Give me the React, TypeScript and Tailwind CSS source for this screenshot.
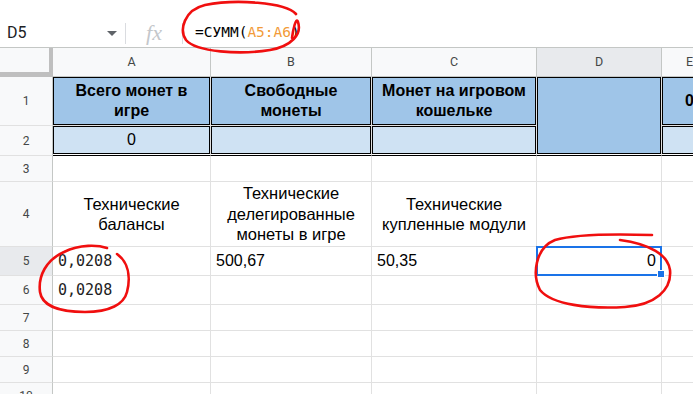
import React from "react";

const sans = "font-['Liberation_Sans',Arial,sans-serif]";
const ui = "font-['Roboto',Arial,sans-serif]";
const mono = "font-['DejaVu_Sans_Mono',monospace]";

const gridLine = "border-r border-b border-[#e1e1e1]";

function RowHead({ n, active = false }: { n: number; active?: boolean }) {
  return (
    <div
      className={`flex items-center justify-center border-r border-b border-[#e1e1e1] border-r-[#c4c7c5] text-[12px] text-[#444746] ${ui} ${
        active ? "bg-[#e8eaed]" : "bg-[#f8f9fa]"
      }`}
    >
      {n}
    </div>
  );
}

function ColHead({ label, active = false }: { label: string; active?: boolean }) {
  return (
    <div
      className={`flex items-center justify-center border-r border-b border-[#c4c7c5] text-[12.5px] text-[#444746] ${ui} ${
        active ? "bg-[#e8eaed]" : "bg-[#f8f9fa]"
      }`}
    >
      {label}
    </div>
  );
}

// blue bordered cells in rows 1-2
function BlueCell({
  children,
  light = false,
  bottom = false,
  className = "",
}: {
  children?: React.ReactNode;
  light?: boolean;
  bottom?: boolean;
  className?: string;
}) {
  return (
    <div className={`border-r border-[#e1e1e1] ${bottom ? "border-b border-b-black pb-px" : "border-b"} ${className}`}>
      <div
        className={`flex h-full items-center justify-center border border-black px-[6px] text-center text-black ${sans} ${
          light ? "bg-[#cfe2f3]" : "bg-[#9fc5e8]"
        }`}
      >
        {children}
      </div>
    </div>
  );
}

function Empty() {
  return <div className={gridLine} />;
}

export default function App() {
  return (
    <div className="relative h-[394px] w-[693px] overflow-hidden bg-white">
      {/* formula bar */}
      <div className="flex h-[48px] items-center border-b border-[#c4c7c5] pt-[19px]">
        <div className="flex w-[125px] items-center justify-between pl-[7px] pr-[8px]">
          <span className={`text-[16px] text-[#202124] ${ui}`}>D5</span>
          <svg width="10" height="5" viewBox="0 0 10 5">
            <path d="M0 0h10L5 5z" fill="#5f6368" />
          </svg>
        </div>
        <div className="h-[21px] w-px bg-[#dadce0]" />
        <div className="flex w-[56px] items-center justify-center">
          <span className="font-['Liberation_Serif',serif] text-[22px] italic leading-none text-[#c4c7cb]">fx</span>
        </div>
        <div className="h-[21px] w-px bg-[#dadce0]" />
        <div className={`pl-[12px] text-[14.5px] text-black ${mono}`}>
          =СУММ(<span className="text-[#f29b38]">A5:A6</span>)
        </div>
      </div>

      {/* sheet grid */}
      <div className="grid grid-cols-[53px_158px_161px_165px_125px_56px] grid-rows-[29px_49px_30px_26px_65px_29px_29px_26px_26px_26px_26px]">
        <div className="border-r-4 border-b-[5px] border-[#bfbfbf] bg-[#f8f9fa]" />
        {["A", "B", "C", "D", "E"].map((c) => (
          <ColHead key={c} label={c} active={c === "D"} />
        ))}

        {/* row 1 */}
        <RowHead n={1} />
        <BlueCell>
          <span className="text-[16px] font-bold leading-[20px]">Всего монет в игре</span>
        </BlueCell>
        <BlueCell>
          <span className="text-[16px] font-bold leading-[20px]">Свободные монеты</span>
        </BlueCell>
        <BlueCell>
          <span className="text-[16px] font-bold leading-[20px]">Монет на игровом кошельке</span>
        </BlueCell>
        <BlueCell bottom className="row-span-2" />
        <BlueCell>
          <span className="text-[16px] font-bold">0</span>
        </BlueCell>

        {/* row 2 */}
        <RowHead n={2} />
        <BlueCell light bottom>
          <span className="text-[16px]">0</span>
        </BlueCell>
        <BlueCell light bottom />
        <BlueCell light bottom />
        <BlueCell light bottom />

        {/* row 3 */}
        <RowHead n={3} />
        <Empty />
        <Empty />
        <Empty />
        <Empty />
        <Empty />

        {/* row 4 */}
        <RowHead n={4} />
        {["Технические балансы", "Технические делегированные монеты в игре", "Технические купленные модули"].map((t) => (
          <div key={t} className={`flex items-center justify-center px-[4px] text-center ${gridLine}`}>
            <span className={`text-[16.5px] leading-[20.5px] text-black ${sans}`}>{t}</span>
          </div>
        ))}
        <Empty />
        <Empty />

        {/* row 5 */}
        <RowHead n={5} active />
        <div className={`flex items-center pl-[5px] ${gridLine}`}>
          <span className={`text-[15px] text-[#222] ${mono}`}>0,0208</span>
        </div>
        <div className={`flex items-center pl-[5px] ${gridLine}`}>
          <span className={`text-[16px] text-black ${sans}`}>500,67</span>
        </div>
        <div className={`flex items-center pl-[5px] ${gridLine}`}>
          <span className={`text-[16px] text-black ${sans}`}>50,35</span>
        </div>
        <div className="relative -ml-px -mt-px flex items-center justify-end border-2 border-[#1a73e8] pr-[4px]">
          <span className={`text-[16px] text-black ${sans}`}>0</span>
          <div className="absolute -bottom-[4px] -right-[5px] h-[8px] w-[8px] border border-white bg-[#1a73e8]" />
        </div>
        <Empty />

        {/* row 6 */}
        <RowHead n={6} />
        <div className={`flex items-center pl-[5px] ${gridLine}`}>
          <span className={`text-[15px] text-[#222] ${mono}`}>0,0208</span>
        </div>
        <Empty />
        <Empty />
        <Empty />
        <Empty />

        {[7, 8, 9, 10].map((n) => (
          <React.Fragment key={n}>
            <RowHead n={n} />
            <Empty />
            <Empty />
            <Empty />
            <Empty />
            <Empty />
          </React.Fragment>
        ))}
      </div>

      {/* red hand-drawn marks */}
      <svg className="pointer-events-none absolute left-0 top-0" width="693" height="394" viewBox="0 0 693 394" fill="none">
        <g stroke="#f00f0f" strokeWidth="2.6" strokeLinecap="round" strokeLinejoin="round">
          <path d="M296 14 C285 2 235 -1 205 5 C184 10 179 30 186 40 C196 52 240 55 270 50 C292 46 302 34 298 22 C296 16 293 30 292 38" />
          <path d="M107 248 C98 245 80 244 64 252 C46 260 38 276 40 292 C42 306 60 312 85 312 C110 312 124 304 127 292 C131 276 128 262 117 254" />
          <path d="M652 235 C620 234 575 234 555 240 C535 248 532 275 540 290 C552 305 590 309 625 307 C655 305 672 290 670 270 C668 255 650 244 620 240" />
        </g>
      </svg>
    </div>
  );
}
